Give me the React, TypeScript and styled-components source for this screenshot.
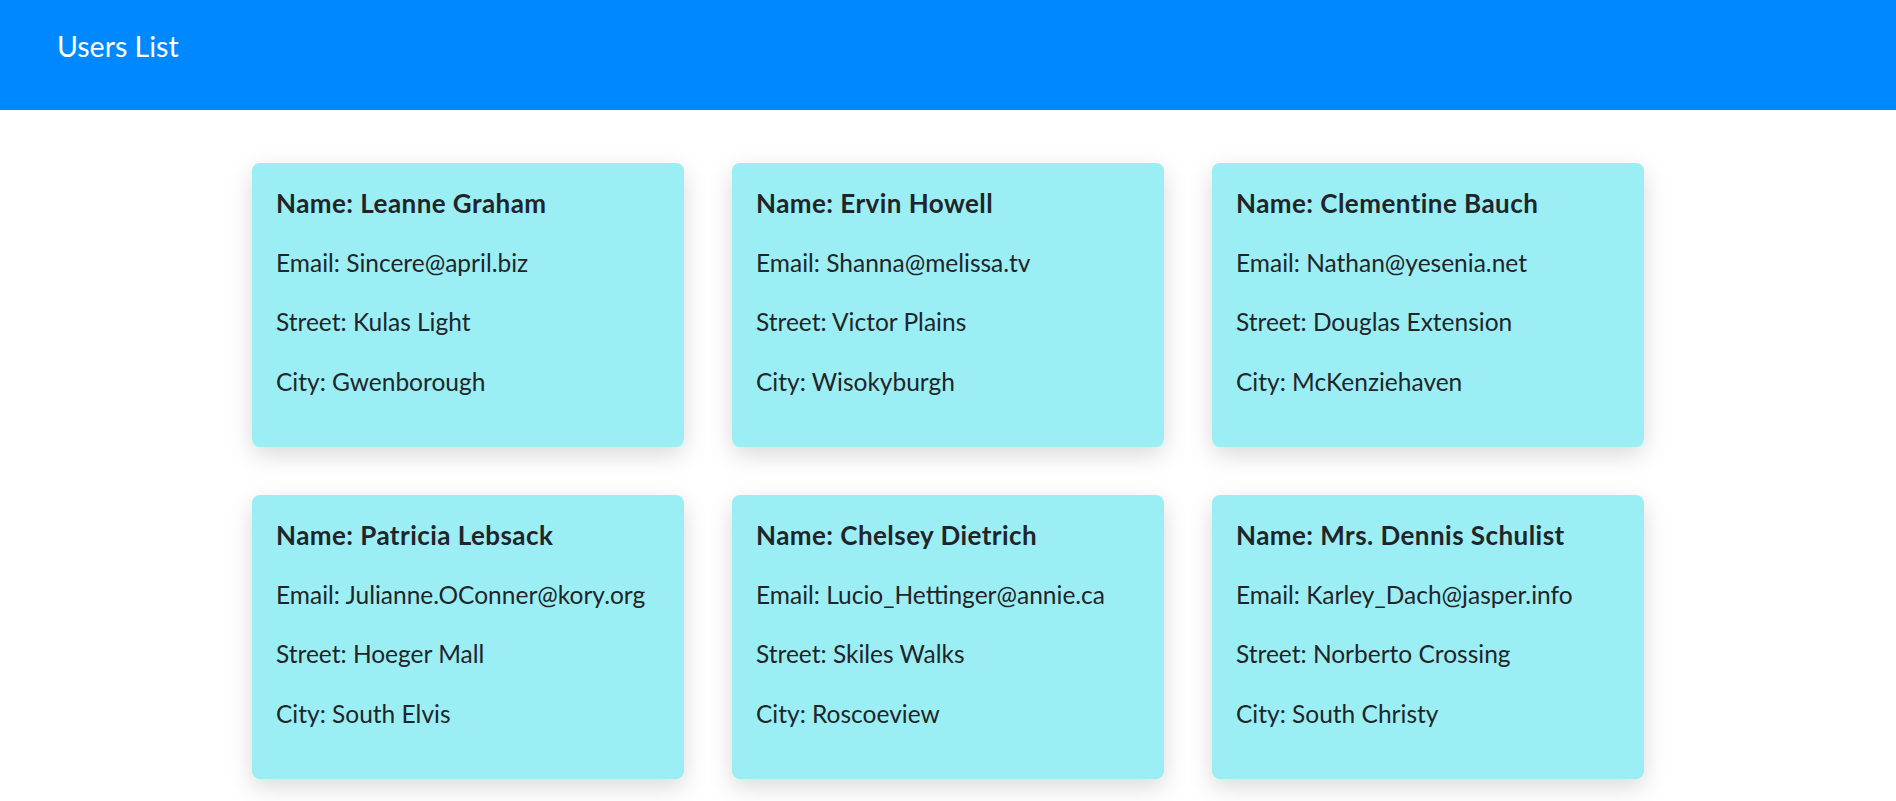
import React from "react";
import styled, { createGlobalStyle } from "styled-components";

const GlobalStyle = createGlobalStyle`
  html, body {
    margin: 0;
    padding: 0;
    background: #ffffff;
    font-family: Lato, "Noto Sans", sans-serif;
  }
  * { box-sizing: border-box; }
`;

const Page = styled.div`
  min-height: 801px;
  background: #ffffff;
`;

const Header = styled.header`
  height: 110px;
  background: #0088ff;
  display: flex;
  align-items: flex-start;
  padding: 26px 0 0 57px;
`;

const Title = styled.h1`
  margin: 0;
  color: #ffffff;
  font-size: 28.5px;
  font-weight: 400;
  line-height: 40px;
`;

const Grid = styled.main`
  display: grid;
  grid-template-columns: repeat(3, 432px);
  gap: 48px;
  justify-content: center;
  padding: 53px 0 48px;
`;

const Card = styled.article`
  height: 284px;
  background: #9befF4;
  border-radius: 8px;
  box-shadow: 0 8px 24px rgba(0, 0, 0, 0.15);
  padding: 23px 24px 0;
  display: flex;
  flex-direction: column;
  gap: 25.5px;
  color: #212529;
`;

const Line = styled.p<{ $bold?: boolean }>`
  margin: 0;
  font-size: ${(p) => (p.$bold ? "26px" : "24.5px")};
  letter-spacing: ${(p) => (p.$bold ? "0.45px" : "0")};
  line-height: 34px;
  font-weight: ${(p) => (p.$bold ? 700 : 400)};
  white-space: nowrap;
`;

const users = [
  { name: "Leanne Graham", email: "Sincere@april.biz", street: "Kulas Light", city: "Gwenborough" },
  { name: "Ervin Howell", email: "Shanna@melissa.tv", street: "Victor Plains", city: "Wisokyburgh" },
  { name: "Clementine Bauch", email: "Nathan@yesenia.net", street: "Douglas Extension", city: "McKenziehaven" },
  { name: "Patricia Lebsack", email: "Julianne.OConner@kory.org", street: "Hoeger Mall", city: "South Elvis" },
  { name: "Chelsey Dietrich", email: "Lucio_Hettinger@annie.ca", street: "Skiles Walks", city: "Roscoeview" },
  { name: "Mrs. Dennis Schulist", email: "Karley_Dach@jasper.info", street: "Norberto Crossing", city: "South Christy" },
];

export default function App() {
  return (
    <Page>
      <GlobalStyle />
      <Header>
        <Title>Users List</Title>
      </Header>
      <Grid>
        {users.map((u) => (
          <Card key={u.email}>
            <Line $bold>Name: {u.name}</Line>
            <Line>Email: {u.email}</Line>
            <Line>Street: {u.street}</Line>
            <Line>City: {u.city}</Line>
          </Card>
        ))}
      </Grid>
    </Page>
  );
}
